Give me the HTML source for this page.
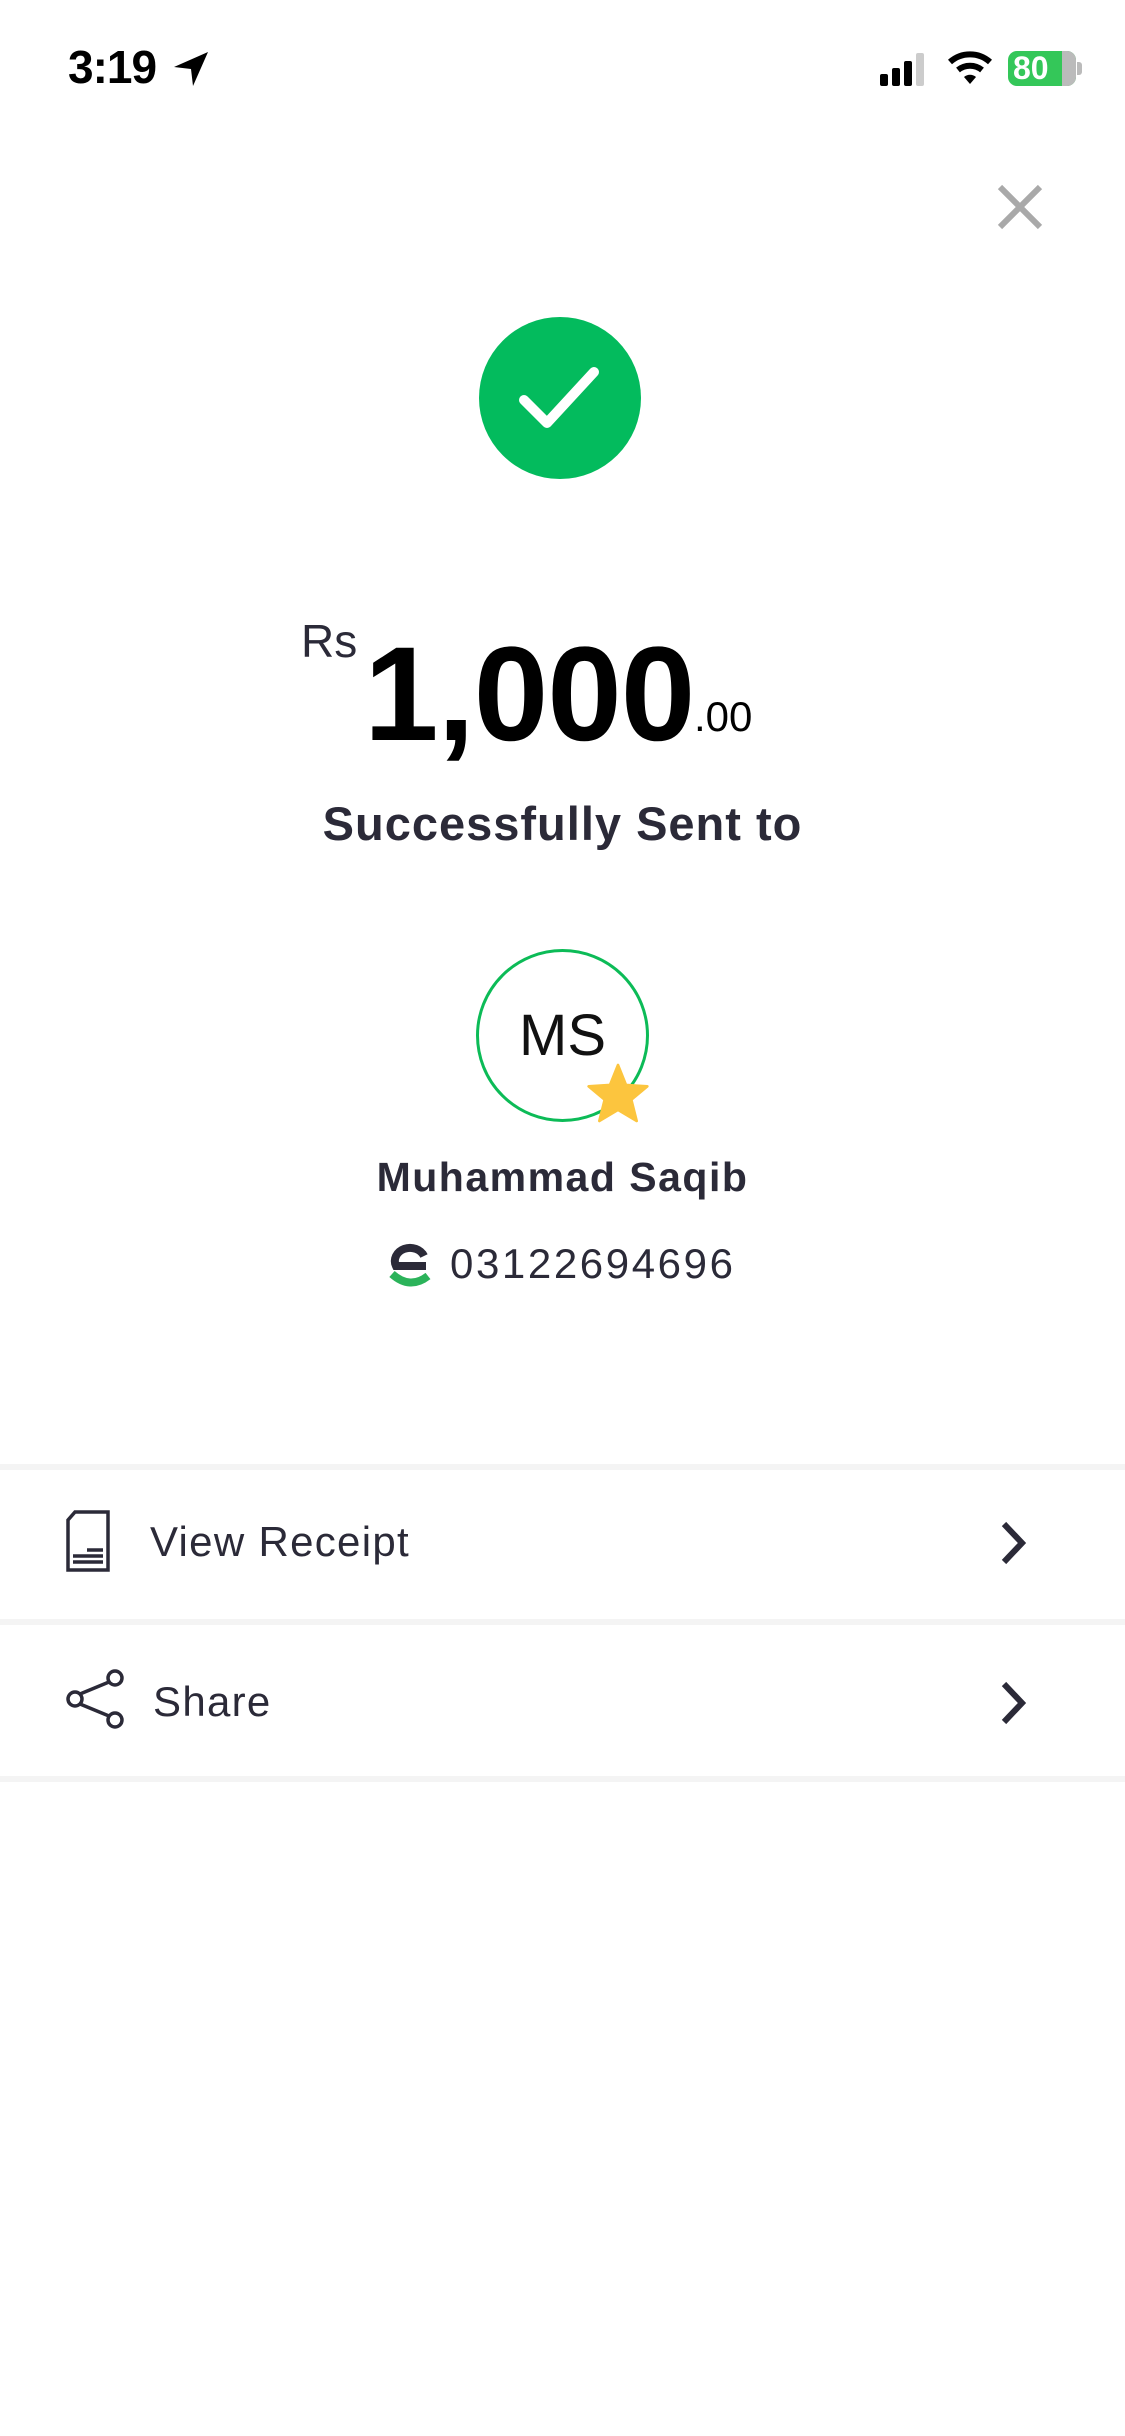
<!DOCTYPE html>
<html><head><meta charset="utf-8"><style>
*{margin:0;padding:0;box-sizing:border-box}
body{width:1125px;height:2436px;background:#fff;font-family:"Liberation Sans",sans-serif;position:relative;overflow:hidden;color:#2b2a38}
.a{position:absolute}
.c{position:absolute;left:0;width:1125px;text-align:center}
.div{position:absolute;left:0;width:1125px;height:6px;background:#f4f4f4}
</style></head><body>
<div class="a" style="left:68px;top:40px;font-size:46px;font-weight:bold;color:#000;letter-spacing:-1px">3:19</div>
<svg class="a" style="left:172px;top:50px" width="38" height="38" viewBox="0 0 38 38"><path d="M36 2 L2 17 L19 19 L21 36 Z" fill="#000"/></svg>
<svg class="a" style="left:880px;top:52px" width="58" height="34"><rect x="0" y="22" width="8" height="12" rx="2" fill="#000"/><rect x="12" y="16" width="8" height="18" rx="2" fill="#000"/><rect x="24" y="9" width="8" height="25" rx="2" fill="#000"/><rect x="36" y="1" width="8" height="33" rx="2" fill="#ccc"/></svg>
<svg class="a" style="left:948px;top:50px" width="44" height="36" viewBox="0 0 44 36"><path d="M2 12 A30 30 0 0 1 42 12" stroke="#000" stroke-width="6" fill="none"/><path d="M10 20 A19 19 0 0 1 34 20" stroke="#000" stroke-width="6" fill="none"/><path d="M16 27 L22 34 L28 27 A9 9 0 0 0 16 27Z" fill="#000"/></svg>
<div class="a" style="left:1008px;top:51px;width:68px;height:35px;border-radius:9px;background:#34c759;overflow:hidden"><div class="a" style="right:0;top:0;width:14px;height:35px;background:#bbb"></div><div class="a" style="left:5px;top:0;font-size:32px;font-weight:bold;color:#fff;line-height:35px">80</div></div>
<div class="a" style="left:1077px;top:62px;width:5px;height:13px;background:#bbb;border-radius:0 3px 3px 0"></div>
<svg class="a" style="left:996px;top:183px" width="48" height="48"><path d="M4 4 L44 44 M44 4 L4 44" stroke="#a9a9a9" stroke-width="6"/></svg>
<svg class="a" style="left:479px;top:317px" width="162" height="162"><circle cx="81" cy="81" r="81" fill="#03bb5d"/><path d="M45 83 L68 106 L115 55" stroke="#fff" stroke-width="10" fill="none" stroke-linecap="round" stroke-linejoin="round"/></svg>
<div class="a" style="left:301px;top:614px;font-size:46px;color:#2b2a38">Rs</div>
<div class="a" style="left:364px;top:618px;font-size:134px;font-weight:bold;color:#000;letter-spacing:-1px">1,000</div>
<div class="a" style="left:694px;top:693px;font-size:42px;color:#000">.00</div>
<div class="c" style="top:796px;font-size:47px;font-weight:bold;letter-spacing:1px">Successfully Sent to</div>
<div class="a" style="left:476px;top:949px;width:173px;height:173px;border:3px solid #0cbb57;border-radius:50%;text-align:center;line-height:167px;font-size:58px;color:#111">MS</div>
<svg class="a" style="left:586px;top:1062px" width="64" height="62" viewBox="0 0 24 23"><path d="M12 1 L15 8.5 L23 9 L17 14 L19 22 L12 17.8 L5 22 L7 14 L1 9 L9 8.5Z" fill="#fcc53e" stroke="#fcc53e" stroke-linejoin="round"/></svg>
<div class="c" style="top:1154px;font-size:41px;font-weight:bold;letter-spacing:1.5px">Muhammad Saqib</div>
<svg class="a" style="left:388px;top:1242px" width="44" height="46" viewBox="0 0 44 46"><path d="M38 24 H8 A15 13 0 1 1 36 14" stroke="#2b2a38" stroke-width="8" fill="none"/><path d="M4 32 Q22 48 40 34" stroke="#2bb35a" stroke-width="8" fill="none"/></svg>
<div class="a" style="left:450px;top:1240px;font-size:42px;letter-spacing:2.6px">03122694696</div>
<div class="div" style="top:1464px"></div>
<svg class="a" style="left:65px;top:1510px" width="46" height="62" viewBox="0 0 46 62"><path d="M10 2 H43 V60 H3 V10 Z" stroke="#2b2a38" stroke-width="3.5" fill="none"/><path d="M8 52 H38 M8 46 H38 M22 40 H38" stroke="#2b2a38" stroke-width="3.5"/></svg>
<div class="a" style="left:150px;top:1518px;font-size:42px;letter-spacing:1.3px">View Receipt</div>
<svg class="a" style="left:998px;top:1520px" width="32" height="46"><path d="M6 4 L24 23 L6 42" stroke="#2b2a38" stroke-width="6" fill="none"/></svg>
<div class="div" style="top:1619px"></div>
<svg class="a" style="left:65px;top:1668px" width="62" height="62" viewBox="0 0 62 62"><circle cx="10" cy="31" r="7" stroke="#2b2a38" stroke-width="3.5" fill="none"/><circle cx="50" cy="10" r="7" stroke="#2b2a38" stroke-width="3.5" fill="none"/><circle cx="50" cy="52" r="7" stroke="#2b2a38" stroke-width="3.5" fill="none"/><path d="M15 26 L44 14 M15 36 L44 48" stroke="#2b2a38" stroke-width="3.5"/></svg>
<div class="a" style="left:153px;top:1678px;font-size:42px;letter-spacing:1.3px">Share</div>
<svg class="a" style="left:998px;top:1680px" width="32" height="46"><path d="M6 4 L24 23 L6 42" stroke="#2b2a38" stroke-width="6" fill="none"/></svg>
<div class="div" style="top:1776px"></div>
</body></html>
